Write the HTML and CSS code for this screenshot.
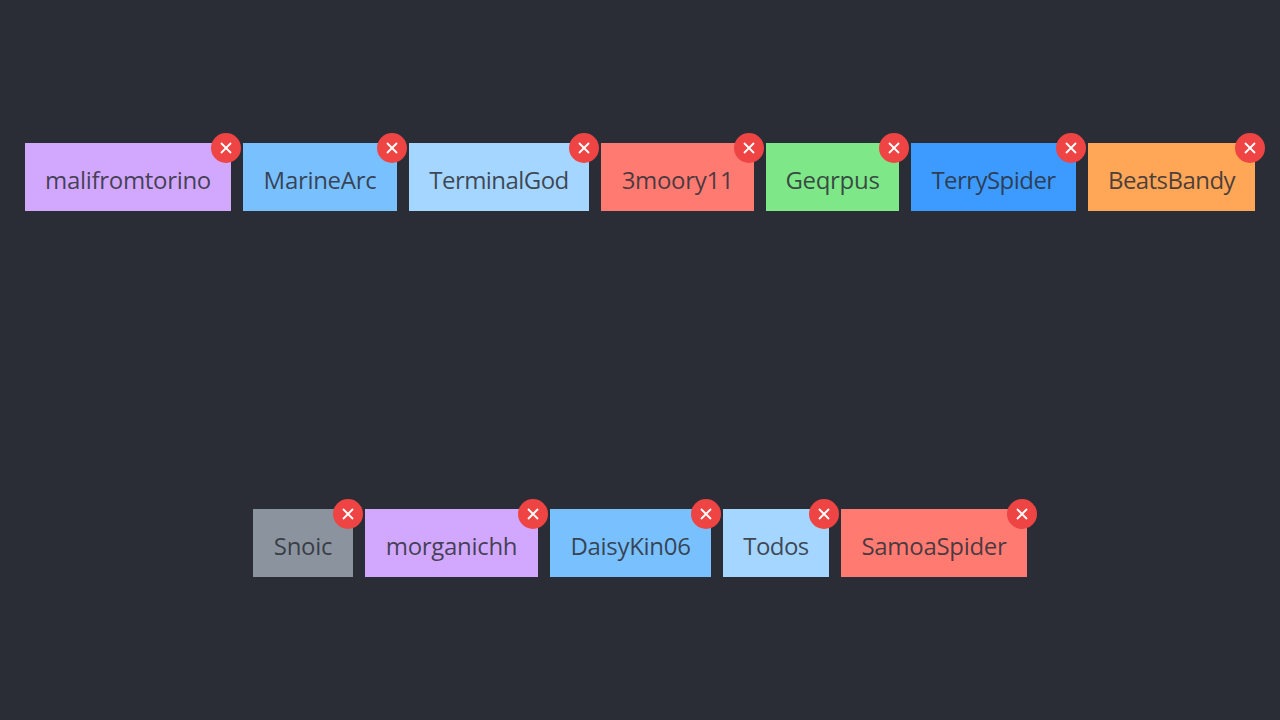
FILE: index.html
```html
<!DOCTYPE html>
<html lang="en">
<head>
    <meta charset="UTF-8">
    <title>Tags</title>
    <link rel="stylesheet" href="styles.css">
</head>
<body>
    <div class="board">
        <div class="row">
            <div class="tag purple w-206">malifromtorino<span class="remove"><svg viewBox="0 0 14 14"><path d="M2 2L12 12M12 2L2 12"/></svg></span></div>
            <div class="tag blue w-154">MarineArc<span class="remove"><svg viewBox="0 0 14 14"><path d="M2 2L12 12M12 2L2 12"/></svg></span></div>
            <div class="tag sky w-180 tight">TerminalGod<span class="remove"><svg viewBox="0 0 14 14"><path d="M2 2L12 12M12 2L2 12"/></svg></span></div>
            <div class="tag red w-153">3moory11<span class="remove"><svg viewBox="0 0 14 14"><path d="M2 2L12 12M12 2L2 12"/></svg></span></div>
            <div class="tag green w-133">Geqrpus<span class="remove"><svg viewBox="0 0 14 14"><path d="M2 2L12 12M12 2L2 12"/></svg></span></div>
            <div class="tag deep w-165 tight">TerrySpider<span class="remove"><svg viewBox="0 0 14 14"><path d="M2 2L12 12M12 2L2 12"/></svg></span></div>
            <div class="tag orange w-167 tight">BeatsBandy<span class="remove"><svg viewBox="0 0 14 14"><path d="M2 2L12 12M12 2L2 12"/></svg></span></div>
        </div>
        <div class="row">
            <div class="tag grey w-100">Snoic<span class="remove"><svg viewBox="0 0 14 14"><path d="M2 2L12 12M12 2L2 12"/></svg></span></div>
            <div class="tag purple w-173">morganichh<span class="remove"><svg viewBox="0 0 14 14"><path d="M2 2L12 12M12 2L2 12"/></svg></span></div>
            <div class="tag blue w-161">DaisyKin06<span class="remove"><svg viewBox="0 0 14 14"><path d="M2 2L12 12M12 2L2 12"/></svg></span></div>
            <div class="tag sky w-106 tight">Todos<span class="remove"><svg viewBox="0 0 14 14"><path d="M2 2L12 12M12 2L2 12"/></svg></span></div>
            <div class="tag red w-186">SamoaSpider<span class="remove"><svg viewBox="0 0 14 14"><path d="M2 2L12 12M12 2L2 12"/></svg></span></div>
        </div>
    </div>
</body>
</html>
```
FILE: styles.css
```css
body {
    margin: 0;
    height: 720px;
    overflow: hidden;
    background-color: #2b2d36;
    font-family: "Open Sans", "Noto Sans", sans-serif;
}

.board {
    display: flex;
    flex-direction: column;
    gap: 298px;
    padding-top: 143px;
}

.row {
    display: flex;
    justify-content: center;
    gap: 12px;
}

.tag {
    position: relative;
    height: 68px;
    padding-top: 5px;
    box-sizing: border-box;
    display: flex;
    align-items: center;
    justify-content: center;
    font-size: 24px;
    letter-spacing: -0.3px;
    color: rgba(43, 45, 54, 0.85);
}

.tight { letter-spacing: -0.55px; }

.remove {
    position: absolute;
    top: -10px;
    right: -10px;
    width: 30px;
    height: 30px;
    border-radius: 50%;
    background-color: #ef4444;
    display: flex;
    align-items: center;
    justify-content: center;
}

.remove svg {
    width: 14px;
    height: 14px;
    fill: none;
    stroke: #fff;
    stroke-width: 1.8;
}

/* tag widths */
.w-100 { width: 100px; }
.w-106 { width: 106px; }
.w-133 { width: 133px; }
.w-153 { width: 153px; }
.w-154 { width: 154px; }
.w-161 { width: 161px; }
.w-165 { width: 165px; }
.w-167 { width: 167px; }
.w-173 { width: 173px; }
.w-180 { width: 180px; }
.w-186 { width: 186px; }
.w-206 { width: 206px; }

.purple { background-color: #d2a8ff; }
.blue { background-color: #79c0ff; }
.sky { background-color: #a5d6ff; }
.red { background-color: #ff7b72; }
.green { background-color: #7ee787; }
.deep { background-color: #3d9bff; }
.orange { background-color: #ffa657; }
.grey { background-color: #8b949e; }
```
